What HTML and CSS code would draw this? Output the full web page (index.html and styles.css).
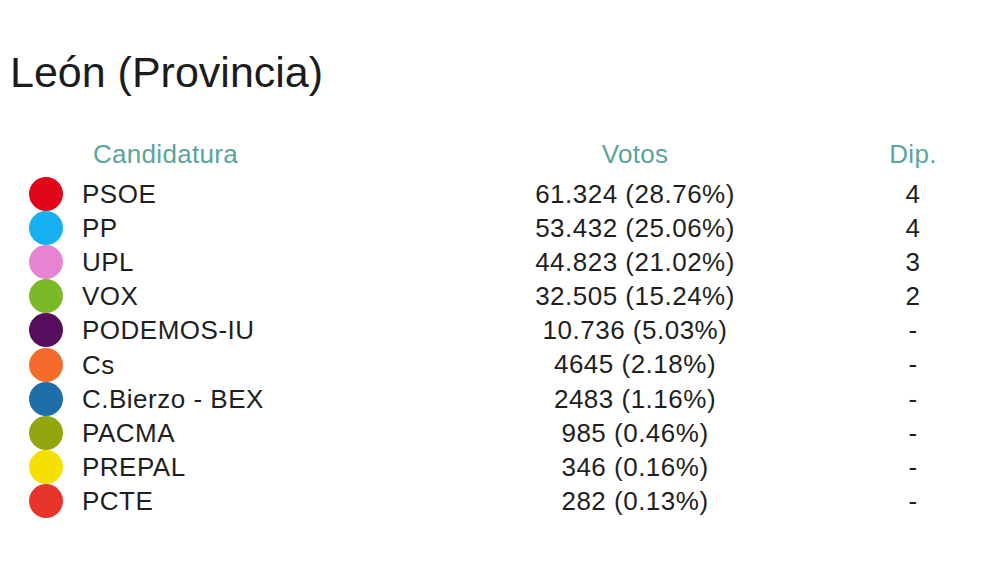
FILE: index.html
```html
<!DOCTYPE html>
<html lang="es">
<head>
<meta charset="utf-8">
<title>León (Provincia)</title>
<link rel="stylesheet" href="styles.css">
</head>
<body>
<main class="page">
  <h1 class="title">León (Provincia)</h1>
  <div class="results">
    <div class="head head-cand">Candidatura</div>
    <div class="head head-votes">Votos</div>
    <div class="head head-dip">Dip.</div>

    <div class="cand"><span class="dot psoe"></span>PSOE</div>
    <div class="votes">61.324 (28.76%)</div>
    <div class="dip">4</div>

    <div class="cand"><span class="dot pp"></span>PP</div>
    <div class="votes">53.432 (25.06%)</div>
    <div class="dip">4</div>

    <div class="cand"><span class="dot upl"></span>UPL</div>
    <div class="votes">44.823 (21.02%)</div>
    <div class="dip">3</div>

    <div class="cand"><span class="dot vox"></span>VOX</div>
    <div class="votes">32.505 (15.24%)</div>
    <div class="dip">2</div>

    <div class="cand"><span class="dot podemos"></span>PODEMOS-IU</div>
    <div class="votes">10.736 (5.03%)</div>
    <div class="dip">-</div>

    <div class="cand"><span class="dot cs"></span>Cs</div>
    <div class="votes">4645 (2.18%)</div>
    <div class="dip">-</div>

    <div class="cand"><span class="dot bex"></span>C.Bierzo - BEX</div>
    <div class="votes">2483 (1.16%)</div>
    <div class="dip">-</div>

    <div class="cand"><span class="dot pacma"></span>PACMA</div>
    <div class="votes">985 (0.46%)</div>
    <div class="dip">-</div>

    <div class="cand"><span class="dot prepal"></span>PREPAL</div>
    <div class="votes">346 (0.16%)</div>
    <div class="dip">-</div>

    <div class="cand"><span class="dot pcte"></span>PCTE</div>
    <div class="votes">282 (0.13%)</div>
    <div class="dip">-</div>
  </div>
</main>
</body>
</html>
```

FILE: styles.css
```css
html, body {
  margin: 0;
  padding: 0;
  background: #ffffff;
}

body {
  width: 1000px;
  height: 563px;
  overflow: hidden;
  font-family: "Liberation Sans", Arial, sans-serif;
  color: #1f1f1f;
}

.page {
  padding: 48px 0 0 10px;
}

.title {
  margin: 0;
  font-size: 43px;
  font-weight: normal;
  line-height: 48px;
  color: #1c1c1c;
}

.results {
  margin-top: 41px;
  margin-left: -1px;
  display: grid;
  grid-template-columns: 436px 380px 176px;
  grid-template-rows: 40px;
  grid-auto-rows: 34.1px;
  font-size: 26px;
  letter-spacing: 0.5px;
}

.head {
  color: #5aa59b;
  line-height: 34px;
  height: 34px;
  letter-spacing: 0.3px;
}

.head-cand {
  padding-left: 84px;
}

.head-votes,
.head-dip {
  text-align: center;
}

.cand {
  display: flex;
  align-items: center;
  gap: 19px;
  padding-left: 20px;
  line-height: 34px;
}

.votes,
.dip {
  text-align: center;
  line-height: 34px;
}

.dot {
  width: 34px;
  height: 34px;
  border-radius: 50%;
  flex: none;
}

.psoe { background: #e2061a; }
.pp { background: #17b1f2; }
.upl { background: #e684d2; }
.vox { background: #7cb928; }
.podemos { background: #560d5d; }
.cs { background: #f46b2b; }
.bex { background: #1e6ea8; }
.pacma { background: #92a70e; }
.prepal { background: #f6e003; }
.pcte { background: #e8352b; }
```
